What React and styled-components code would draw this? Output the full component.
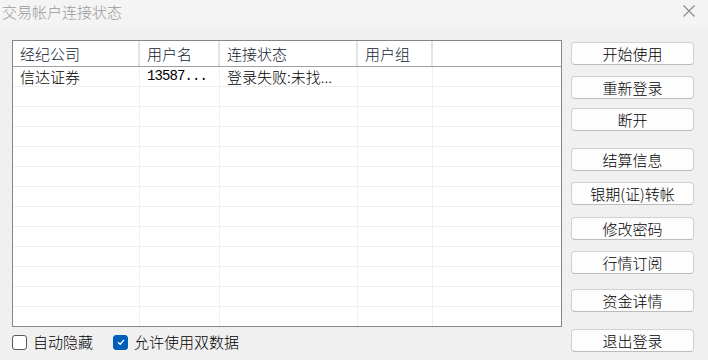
import React from 'react';
import styled, { createGlobalStyle } from 'styled-components';

const GlobalStyle = createGlobalStyle`
    html, body {
        margin: 0;
        padding: 0;
        background: #f0f0f0;
    }
    body {
        font-family: "Noto Sans CJK SC", "Liberation Sans", sans-serif;
        font-size: 15px;
        font-weight: 300;
        color: #000;
    }
`;

const colunas = [
    { titulo: '经纪公司', largura: 127 },
    { titulo: '用户名', largura: 80 },
    { titulo: '连接状态', largura: 138 },
    { titulo: '用户组', largura: 75 },
];

const linhas = [['信达证券', '13587...', '登录失败:未找...', '']];

const botoes = [
    { texto: '开始使用', topo: 2 },
    { texto: '重新登录', topo: 11 },
    { texto: '断开', topo: 9 },
    { texto: '结算信息', topo: 17 },
    { texto: '银期(证)转帐', topo: 11 },
    { texto: '修改密码', topo: 12 },
    { texto: '行情订阅', topo: 11 },
    { texto: '资金详情', topo: 15 },
    { texto: '退出登录', topo: 17 },
];

export default function App() {
    const vazias = Array.from({ length: 13 });
    return (
        <Janela>
            <GlobalStyle />
            <BarraTitulo>
                <Titulo>交易帐户连接状态</Titulo>
                <Fechar>
                    <svg width="12" height="12" viewBox="0 0 12 12">
                        <path d="M0.5 0.5 L11.5 11.5 M11.5 0.5 L0.5 11.5" stroke="#8a8a8a" strokeWidth="1.1" fill="none" />
                    </svg>
                </Fechar>
            </BarraTitulo>
            <Corpo>
                <Esquerda>
                    <Lista>
                        <Cabecalho>
                            {colunas.map((c, i) => (
                                <CelulaCabecalho key={i} largura={c.largura}>{c.titulo}</CelulaCabecalho>
                            ))}
                            <CelulaCabecalho resto />
                        </Cabecalho>
                        {linhas.map((l, i) => (
                            <Linha key={i}>
                                {colunas.map((c, j) => (
                                    <Celula key={j} largura={c.largura} mono={j === 1}>{l[j]}</Celula>
                                ))}
                                <Celula resto />
                            </Linha>
                        ))}
                        {vazias.map((_, i) => (
                            <Linha key={'v' + i}>
                                {colunas.map((c, j) => (
                                    <Celula key={j} largura={c.largura} />
                                ))}
                                <Celula resto />
                            </Linha>
                        ))}
                    </Lista>
                    <Opcoes>
                        <Opcao>
                            <Caixa />
                            自动隐藏
                        </Opcao>
                        <Opcao>
                            <Caixa marcada>
                                <svg width="10" height="10" viewBox="0 0 10 10">
                                    <path d="M2 5.2 L4.2 7.2 L8 2.8" stroke="#fff" strokeWidth="1.3" fill="none" />
                                </svg>
                            </Caixa>
                            允许使用双数据
                        </Opcao>
                    </Opcoes>
                </Esquerda>
                <Botoes>
                    {botoes.map((b, i) => (
                        <Botao key={i} topo={b.topo}>{b.texto}</Botao>
                    ))}
                </Botoes>
            </Corpo>
        </Janela>
    );
}

const Janela = styled.div`
    width: 708px;
    height: 360px;
    background: #f0f0f0;
    overflow: hidden;
`;
const BarraTitulo = styled.div`
    height: 27px;
    background: #f4f4f4;
    display: flex;
    align-items: center;
    justify-content: space-between;
    padding: 0 13px 0 2px;
`;
const Titulo = styled.div`
    color: #9a9a9a;
    font-size: 15px;
    line-height: 20px;
    margin-top: -4px;
`;
const Fechar = styled.div`
    display: flex;
    margin-top: -5px;
`;
const Corpo = styled.div`
    display: flex;
    padding: 13px 0 0 12px;
`;
const Esquerda = styled.div`
    display: flex;
    flex-direction: column;
`;
const Lista = styled.div`
    width: 548px;
    height: 285px;
    border: 1px solid #82878f;
    background: #fff;
    overflow: hidden;
`;
const Cabecalho = styled.div`
    display: flex;
    height: 25px;
    border-bottom: 1px solid #a0a0a0;
`;
const CelulaCabecalho = styled.div`
    width: ${props => props.largura ? props.largura + 'px' : 'auto'};
    flex: ${props => props.resto ? 1 : 'none'};
    box-sizing: border-box;
    border-right: ${props => props.resto ? 'none' : '2px solid #e3e3e3'};
    padding-left: 7px;
    line-height: 25px;
    color: #101a30;
    white-space: nowrap;
`;
const Linha = styled.div`
    display: flex;
    height: 19px;
    border-bottom: 1px solid #efefef;
`;
const Celula = styled.div`
    width: ${props => props.largura ? props.largura + 'px' : 'auto'};
    flex: ${props => props.resto ? 1 : 'none'};
    box-sizing: border-box;
    border-right: ${props => props.resto ? 'none' : '1px solid #efefef'};
    padding-left: 7px;
    line-height: 19px;
    white-space: nowrap;
    font-family: ${props => props.mono ? '"Liberation Mono", monospace' : 'inherit'};
    font-size: ${props => props.mono ? '14px' : '15px'};
    letter-spacing: ${props => props.mono ? '-0.9px' : 'normal'};
`;
const Opcoes = styled.div`
    display: flex;
    align-items: center;
    gap: 20px;
    height: 30px;
    padding-top: 0;
`;
const Opcao = styled.label`
    display: flex;
    align-items: center;
    gap: 6px;
    font-size: 15px;
    line-height: 18px;
`;
const Caixa = styled.span`
    width: 13px;
    height: 13px;
    border-radius: 3px;
    border: 1px solid ${props => props.marcada ? '#005fb8' : '#5a5a5a'};
    background: ${props => props.marcada ? '#005fb8' : '#fff'};
    display: flex;
    align-items: center;
    justify-content: center;
`;
const Botoes = styled.div`
    display: flex;
    flex-direction: column;
    margin-left: 9px;
`;
const Botao = styled.button`
    width: 123px;
    height: 23px;
    margin-top: ${props => props.topo}px;
    background: #fdfdfd;
    border: 1px solid #d0d0d0;
    border-bottom-color: #bcbcbc;
    border-radius: 4px;
    font-family: "Noto Sans CJK SC", "Liberation Sans", sans-serif;
    font-size: 15px;
    font-weight: 300;
    color: #000;
    padding: 0;
    line-height: 20px;
`;
